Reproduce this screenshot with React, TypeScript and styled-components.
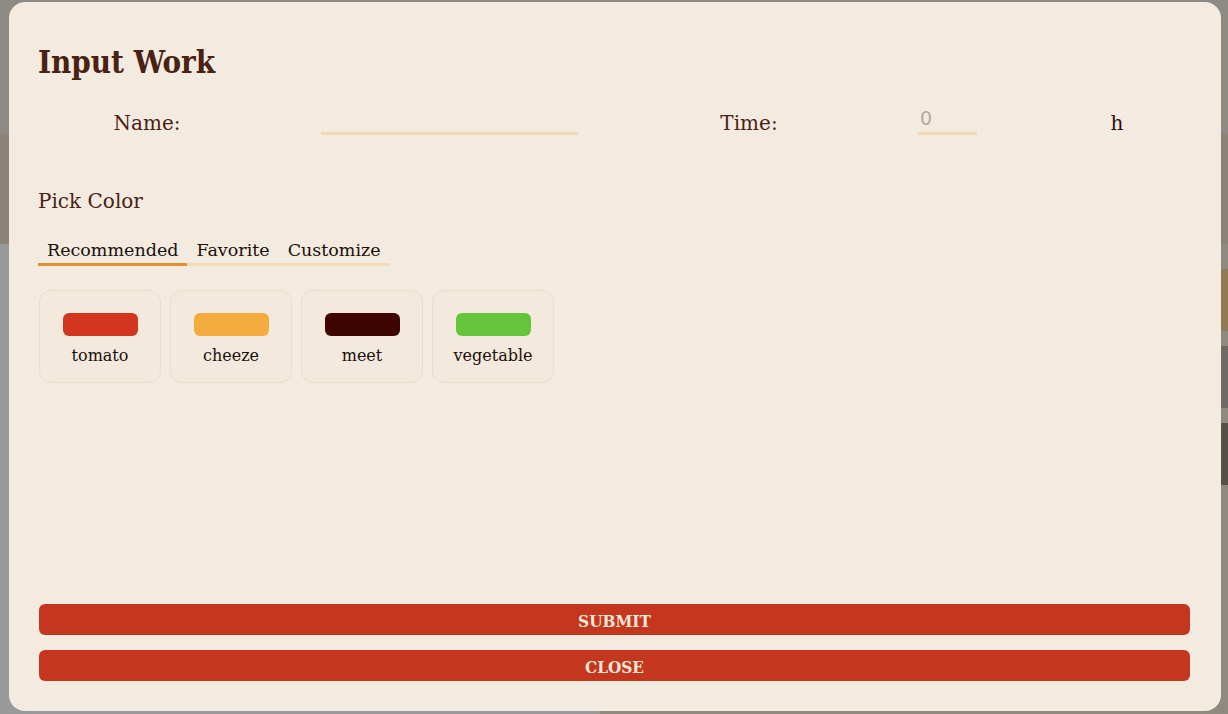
import React from 'react'
import styled, { createGlobalStyle } from 'styled-components'

const GlobalStyle = createGlobalStyle`
    html, body {
        margin: 0;
        padding: 0;
        height: 100%;
        overflow: hidden;
    }
    body {
        font-family: "DejaVu Serif", serif;
    }
`

const Page = styled.div`
    width: 100vw;
    height: 100vh;
    display: flex;
    flex-direction: column;
    background-color: #8f8a80;
`

const PageHeader = styled.header`
    height: 134px;
    flex-shrink: 0;
    background-color: #8d8983;
    text-align: center;
    overflow: hidden;
`

const PageTitle = styled.h1`
    margin: -26px 0 0 0;
    font-family: "DejaVu Serif Condensed", "DejaVu Serif", serif;
    font-size: 30px;
    line-height: 30px;
    color: #2e1309;
`

const Banner = styled.div`
    height: 110px;
    flex-shrink: 0;
    background-color: #8b8373;
`

const PageBody = styled.div`
    flex: 1;
    display: grid;
    grid-template-columns: 600px 1fr;
`

const SideColumn = styled.div`
    background-color: #999999;
`

const CardColumn = styled.div`
    display: flex;
    flex-direction: column;
    gap: 15px;
    padding-top: 25px;
`

const BackCard = styled.div<{ $tone: string }>`
    height: 62px;
    background-color: ${(p) => p.$tone};
`

const Modal = styled.div`
    position: fixed;
    left: 9px;
    top: 2px;
    width: 1212px;
    height: 709px;
    box-sizing: border-box;
    padding: 0 31px 30px 29px;
    border-radius: 16px;
    background-color: #f3ebdf;
    display: flex;
    flex-direction: column;
`

const Title = styled.h2`
    margin: 42px 0 0 0;
    font-family: "DejaVu Serif Condensed", "DejaVu Serif", serif;
    font-size: 31px;
    line-height: 36px;
    font-weight: bold;
    color: #4a2113;
`

const FieldRow = styled.div`
    margin-top: 31px;
    height: 24px;
    display: grid;
    grid-template-columns: 218px 387px 212px 185px 1fr;
    justify-items: center;
    align-items: start;
`

const Label = styled.label`
    font-size: 20px;
    line-height: 24px;
    color: #4a2113;
`

const Unit = styled(Label)`
    margin-left: 4px;
    color: #2e0e0a;
`

const TextInput = styled.input<{ $w: number }>`
    width: ${(p) => p.$w}px;
    height: 24px;
    box-sizing: border-box;
    padding: 0 2px 7px;
    border: none;
    border-bottom: 3px solid #f0d9b5;
    background: transparent;
    font-family: "DejaVu Sans", sans-serif;
    font-size: 19px;
    line-height: 14px;
    color: #3a1410;
    outline: none;
    &::placeholder {
        color: #b3aa9e;
    }
`

const SectionTitle = styled.div`
    margin-top: 54px;
    font-size: 20px;
    line-height: 24px;
    color: #4a2113;
`

const Tabs = styled.div`
    margin-top: 27px;
    align-self: flex-start;
    display: flex;
    border-bottom: 3px solid #f2dcb8;
`

const Tab = styled.div<{ $active?: boolean }>`
    padding: 0 9px 3px;
    margin-bottom: -3px;
    font-size: 17.5px;
    line-height: 20px;
    color: #1c0f0c;
    border-bottom: 3px solid ${(p) => (p.$active ? '#e0902f' : 'transparent')};
    cursor: pointer;
`

const CardList = styled.div`
    margin-top: 24px;
    padding-left: 1px;
    display: flex;
    gap: 9px;
`

const ColorCard = styled.div`
    width: 122px;
    height: 93px;
    box-sizing: border-box;
    padding-top: 22px;
    border: 1px solid #eddcc6;
    border-radius: 12px;
    background-color: #f3e9dc;
    display: flex;
    flex-direction: column;
    align-items: center;
    cursor: pointer;
`

const Swatch = styled.div<{ $color: string }>`
    width: 75px;
    height: 23px;
    border-radius: 6px;
    background-color: ${(p) => p.$color};
`

const SwatchName = styled.div`
    margin-top: 10px;
    font-size: 16px;
    line-height: 20px;
    color: #1c0f0c;
`

const Spacer = styled.div`
    flex: 1;
`

const Button = styled.button`
    margin-left: 1px;
    height: 31px;
    padding: 3px 0 0;
    border: none;
    border-radius: 6px;
    background-color: #c5361f;
    color: #f6e8d6;
    font-family: "DejaVu Serif Condensed", "DejaVu Serif", serif;
    font-weight: bold;
    font-size: 17px;
    text-transform: uppercase;
    cursor: pointer;
    & + & {
        margin-top: 15px;
    }
`

const colors = [
    { id: '0', name: 'tomato', color: '#d2361f' },
    { id: '1', name: 'cheeze', color: '#f3ab3d' },
    { id: '2', name: 'meet', color: '#3f0500' },
    { id: '3', name: 'vegetable', color: '#66c43a' },
]

const tabs = ['Recommended', 'Favorite', 'Customize']

const App = () => {
    return (
        <>
            <GlobalStyle />
            <Page>
                <PageHeader>
                    <PageTitle>Hello Work</PageTitle>
                </PageHeader>
                <Banner />
                <PageBody>
                    <SideColumn />
                    <CardColumn>
                        <BackCard $tone="#8f7c55" />
                        <BackCard $tone="#6e6b66" />
                        <BackCard $tone="#555049" />
                    </CardColumn>
                </PageBody>
            </Page>
            <Modal>
                <Title>Input Work</Title>
                <FieldRow>
                    <Label>Name:</Label>
                    <TextInput $w={257} />
                    <Label>Time:</Label>
                    <TextInput $w={59} placeholder="0" />
                    <Unit>h</Unit>
                </FieldRow>
                <SectionTitle>Pick Color</SectionTitle>
                <Tabs>
                    {tabs.map((t, i) => (
                        <Tab key={t} $active={i === 0}>{t}</Tab>
                    ))}
                </Tabs>
                <CardList>
                    {colors.map((c) => (
                        <ColorCard key={c.id}>
                            <Swatch $color={c.color} />
                            <SwatchName>{c.name}</SwatchName>
                        </ColorCard>
                    ))}
                </CardList>
                <Spacer />
                <Button>Submit</Button>
                <Button>Close</Button>
            </Modal>
        </>
    )
}

export default App
